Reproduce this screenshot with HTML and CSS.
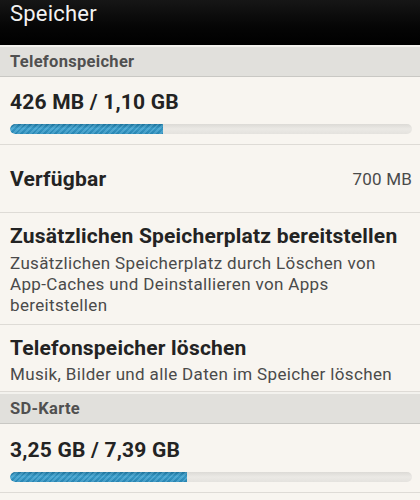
FILE: index.html
```html
<!DOCTYPE html>
<html lang="de">
<head>
<meta charset="utf-8">
<title>Speicher</title>
<link rel="stylesheet" href="styles.css">
</head>
<body>
<div class="screen">
  <header class="appbar"><span class="appbar-title">Speicher</span></header>
  <div class="section">Telefonspeicher</div>
  <div class="row usage">
    <div class="title">426 MB / 1,10 GB</div>
    <div class="bar"><div class="fill" style="width:38%"></div></div>
  </div>
  <div class="row inline">
    <div class="title">Verfügbar</div>
    <div class="value">700 MB</div>
  </div>
  <div class="row item">
    <div class="title">Zusätzlichen Speicherplatz bereitstellen</div>
    <div class="sub">Zusätzlichen Speicherplatz durch Löschen von App-&#8288;Caches und Deinstallieren von Apps bereitstellen</div>
  </div>
  <div class="row item item2">
    <div class="title">Telefonspeicher löschen</div>
    <div class="sub">Musik, Bilder und alle Daten im Speicher löschen</div>
  </div>
  <div class="section">SD-Karte</div>
  <div class="row usage usage2">
    <div class="title">3,25 GB / 7,39 GB</div>
    <div class="bar"><div class="fill" style="width:44%"></div></div>
  </div>
</div>
</body>
</html>
```

FILE: styles.css
```css
* { box-sizing: border-box; }
html, body { margin: 0; padding: 0; }
body {
  width: 420px;
  height: 500px;
  overflow: hidden;
  background: #f8f5f0;
  font-family: Roboto, "Noto Sans", "Liberation Sans", sans-serif;
}
.screen { display: flex; flex-direction: column; }
.appbar {
  height: 45px;
  background: linear-gradient(#161616, #050505 60%, #000);
  padding: 0 10px;
  display: flex;
  align-items: flex-start;
}
.appbar-title {
  color: #f2f2f2;
  font-size: 22px;
  line-height: 24px;
  margin-top: 2px;
  letter-spacing: 0.2px;
}
.section {
  height: 32px;
  border-top: 2px solid #f3f2ee;
  background: #e1e0dc;
  border-bottom: 1px solid #c9c8c4;
  color: #505050;
  font-weight: bold;
  font-size: 16.5px;
  letter-spacing: 0.3px;
  line-height: 30px;
  padding: 0 10px;
}
.row {
  border-bottom: 1px solid #dedbd6;
  padding: 0 8px 0 10px;
  color: #222;
}
.title {
  font-size: 21px;
  line-height: 24px;
  font-weight: bold;
  letter-spacing: 0.2px;
  color: #232323;
}
.usage { padding-top: 13px; padding-bottom: 10px; }
.usage2 { padding-top: 14px; }
.bar {
  margin-top: 10px;
  height: 10px;
  border-radius: 5px;
  background: linear-gradient(#dcdad6, #ebe9e5 50%, #e4e2de);
  overflow: hidden;
}
.fill {
  height: 100%;
  border-radius: 5px 0 0 5px;
  background:
    repeating-linear-gradient(135deg, rgba(255,255,255,0.12) 0 2px, rgba(0,0,0,0.06) 2px 4px),
    linear-gradient(#1f7aa6, #3aa0cf 45%, #2a8dbd);
}
.inline {
  height: 68px;
  display: flex;
  align-items: center;
  justify-content: space-between;
}
.value {
  font-size: 17px;
  letter-spacing: 0.2px;
  color: #4a4a4a;
}
.item { padding-top: 11px; padding-bottom: 8px; }
.item2 { padding-bottom: 6px; }
.sub {
  margin-top: 5px;
  font-size: 17px;
  letter-spacing: 0.35px;
  line-height: 21px;
  color: #4a4a4a;
}
.item2 .sub { margin-top: 4px; }
```
